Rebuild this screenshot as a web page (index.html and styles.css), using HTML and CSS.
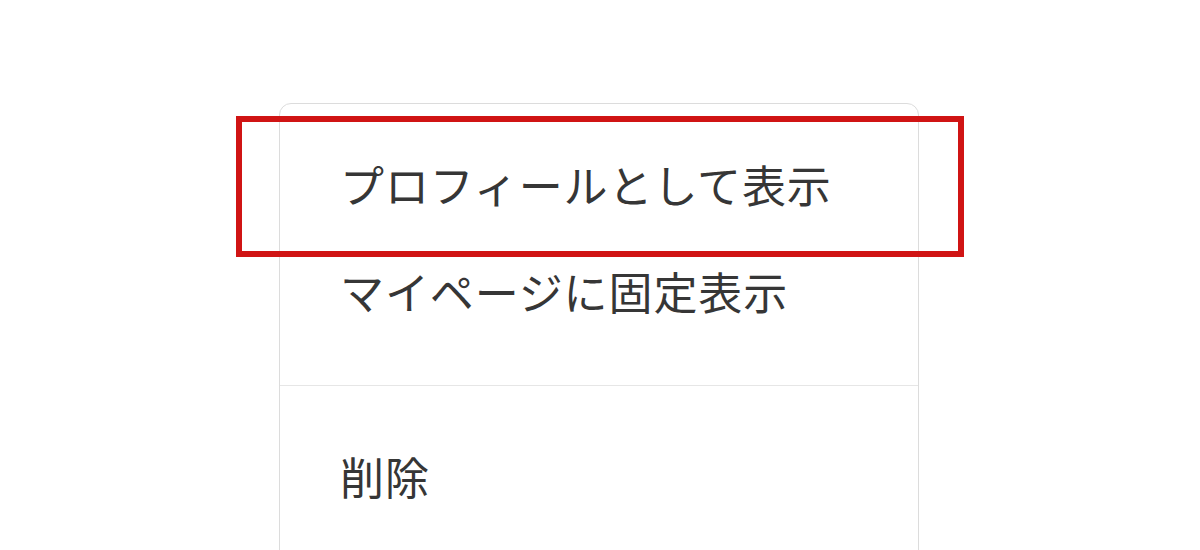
FILE: index.html
```html
<!DOCTYPE html>
<html lang="ja">
<head>
<meta charset="utf-8">
<link rel="stylesheet" href="styles.css">
</head>
<body>
<div class="stage">
  <div class="menu">
    <div class="group">
      <div class="item">プロフィールとして表示</div>
      <div class="item">マイページに固定表示</div>
    </div>
    <div class="group group-last">
      <div class="item">削除</div>
    </div>
  </div>
  <div class="highlight"></div>
</div>
</body>
</html>
```

FILE: styles.css
```css
html, body {
  margin: 0;
  padding: 0;
  background: #ffffff;
  overflow: hidden;
}
.stage {
  position: relative;
  width: 1200px;
  height: 550px;
  overflow: hidden;
}
.menu {
  margin: 103px 0 0 279px;
  width: 638px;
  border: 1px solid #dcdcdc;
  border-radius: 12px;
  background: #fff;
  font-family: "Noto Sans CJK JP", "Noto Sans", sans-serif;
  color: #363636;
}
.group {
  padding: 27px 0 40px;
}
.group + .group {
  border-top: 1px solid #e6e6e6;
  padding: 37px 0 60px;
}
.item {
  height: 107px;
  line-height: 107px;
  font-size: 44px;
  padding-left: 60px;
  letter-spacing: 0.9px;
  white-space: nowrap;
}
.highlight {
  position: absolute;
  left: 236px;
  top: 116px;
  width: 716px;
  height: 129px;
  border: 6px solid #d01414;
}
```
